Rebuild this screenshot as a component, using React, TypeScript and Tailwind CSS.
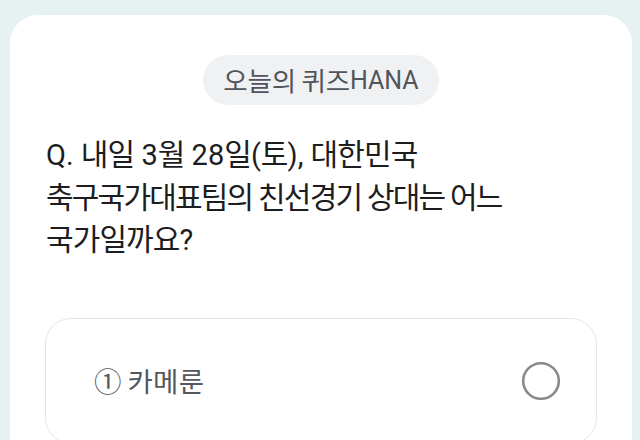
import React from "react";

const L = ({ children }: { children: React.ReactNode }) => (
  <span className="font-['Roboto','Noto_Sans_CJK_KR',sans-serif] text-[29px] tracking-normal leading-none">{children}</span>
);

export default function App() {
  return (
    <div className="w-[640px] h-[440px] overflow-hidden bg-[#e6f2f2] pl-[10px] pr-[8px] pt-[15px] font-['Roboto','Noto_Sans_CJK_KR',sans-serif]">
      <div className="h-[460px] bg-white rounded-t-[28px] px-[35px] pt-[40px] flex flex-col">
        <div className="flex justify-center">
          <div className="h-[50px] px-[20px] rounded-full bg-[#f0f1f3] flex items-center text-[#50555c] leading-none">
            <span className="font-['Noto_Sans_CJK_KR',sans-serif] text-[26.5px] tracking-[-0.2px]">오늘의 퀴즈</span>
            <span className="font-['Roboto',sans-serif] text-[25px]">HANA</span>
          </div>
        </div>
        <div className="mt-[29px] pl-[1px] text-[#1d1d1f] text-[30px] leading-[42.5px] font-['Roboto','Noto_Sans_CJK_KR',sans-serif]">
          <div className="h-[42.5px] tracking-[-0.9px] whitespace-nowrap">
            <L>Q. </L>내일<L> 3</L>월<L> 28</L>일<L>(</L>토<L>), </L>대한민국
          </div>
          <div className="h-[42.5px] tracking-[-1.8px] whitespace-nowrap">축구국가대표팀의 친선경기 상대는 어느</div>
          <div className="h-[42.5px] tracking-[-0.9px] whitespace-nowrap">
            국가일까요<L>?</L>
          </div>
        </div>
        <div className="mt-[56px] h-[126px] rounded-[26px] border border-[#e3e5e8] pl-[48px] pr-[36px] flex items-center justify-between">
          <div className="flex items-center text-[27.5px] text-[#54585e] font-['Noto_Sans_CJK_KR',sans-serif] leading-none">
            <span>①</span>
            <span className="ml-[6px] tracking-[0.3px]">카메룬</span>
          </div>
          <svg width="40" height="40" viewBox="0 0 40 40" className="mr-[-1px]">
            <circle cx="20" cy="20" r="17.8" fill="none" stroke="#8a8a8a" strokeWidth="2.6" />
          </svg>
        </div>
      </div>
    </div>
  );
}
